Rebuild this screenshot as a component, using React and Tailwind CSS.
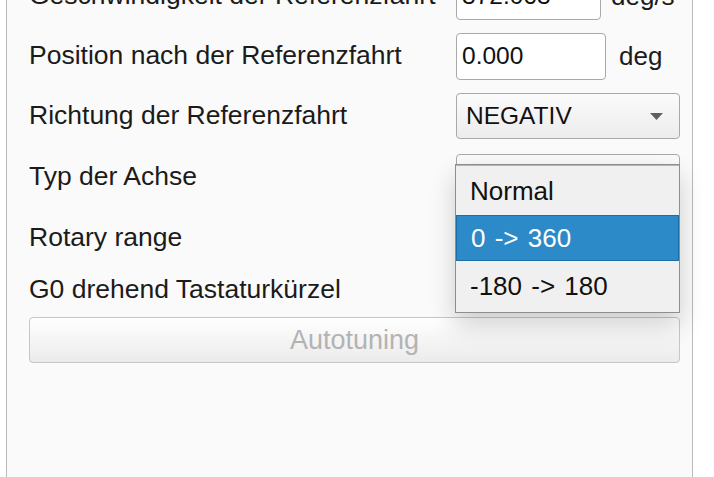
import React from "react";

const font = { fontFamily: '"Liberation Sans", Arial, sans-serif' };

const Label = ({ children }) => (
  <span className="text-[26.5px] text-[#1b1b1b] leading-none">{children}</span>
);

const Input = ({ value, w }) => (
  <div
    className={`h-[47px] ${w} bg-white border border-[#a9a9a9] rounded-[4px] flex items-center pl-[5px] text-[24.5px] text-[#111]`}
  >
    {value}
  </div>
);

const Select = ({ value }) => (
  <div className="h-[46px] w-[224px] border border-[#a9a9a9] rounded-[4px] bg-gradient-to-b from-[#fbfbfb] to-[#ececec] flex items-center justify-between pl-[9px] pr-[16px] text-[24.5px] text-[#111]">
    <span>{value}</span>
    <svg width="13" height="7" viewBox="0 0 13 7">
      <path d="M0 0h13L6.5 7z" fill="#5f5f5f" />
    </svg>
  </div>
);

const Row = ({ h, label, children }) => (
  <div className={`flex items-center ${h}`}>
    <div className="w-[449px] pl-[22px]">
      <Label>{label}</Label>
    </div>
    <div className="flex items-center">{children}</div>
  </div>
);

export default function App() {
  return (
    <div className="relative w-[714px] h-[477px] bg-white overflow-hidden" style={font}>
      <div className="ml-[6px] w-[687px] h-[477px] bg-[#fafafa] border-l border-r border-[#b9b9b9] overflow-hidden">
        <div className="-mt-[34px]">
          <Row h="h-[60px]" label="Geschwindigkeit der Referenzfahrt">
            <Input value="372.063" w="w-[145px]" />
            <span className="ml-[10px] text-[26px] text-[#1b1b1b]">deg/s</span>
          </Row>
          <Row h="h-[60px]" label="Position nach der Referenzfahrt">
            <Input value="0.000" w="w-[150px]" />
            <span className="ml-[13px] text-[26px] text-[#1b1b1b]">deg</span>
          </Row>
          <Row h="h-[60px]" label="Richtung der Referenzfahrt">
            <Select value="NEGATIV" />
          </Row>
          <Row h="h-[62px]" label="Typ der Achse">
            <Select value="" />
          </Row>
          <Row h="h-[60px]" label="Rotary range">
            <Select value="" />
          </Row>
          <Row h="h-[44px]" label="G0 drehend Tastaturkürzel">
            <div className="w-[20px] h-[20px]" />
          </Row>
          <div className="mt-[5px] ml-[22px] w-[651px] h-[46px] border border-[#c6c6c6] rounded-[4px] bg-gradient-to-b from-[#ffffff] to-[#ebebeb] flex items-center justify-center text-[27px] text-[#b3b3b3]">
            Autotuning
          </div>
        </div>
      </div>

      <div className="absolute left-[455px] top-[164px] w-[225px] h-[149px] bg-[#f0f0f0] border border-[#8e8e8e] shadow-[0_12px_24px_rgba(0,0,0,0.18)] flex flex-col text-[26px] [word-spacing:2px]">
        <div className="h-[50px] flex items-center pl-[14px] pt-[2px] text-[#111] border-t border-[#b5b5b5]">
          Normal
        </div>
        <div className="h-[46px] flex items-center pl-[14px] bg-[#2d8ac8] text-white border border-[#1e6ea6]">
          0 -&gt; 360
        </div>
        <div className="flex-1 flex items-center pl-[14px] text-[#111]">-180 -&gt; 180</div>
      </div>
    </div>
  );
}
